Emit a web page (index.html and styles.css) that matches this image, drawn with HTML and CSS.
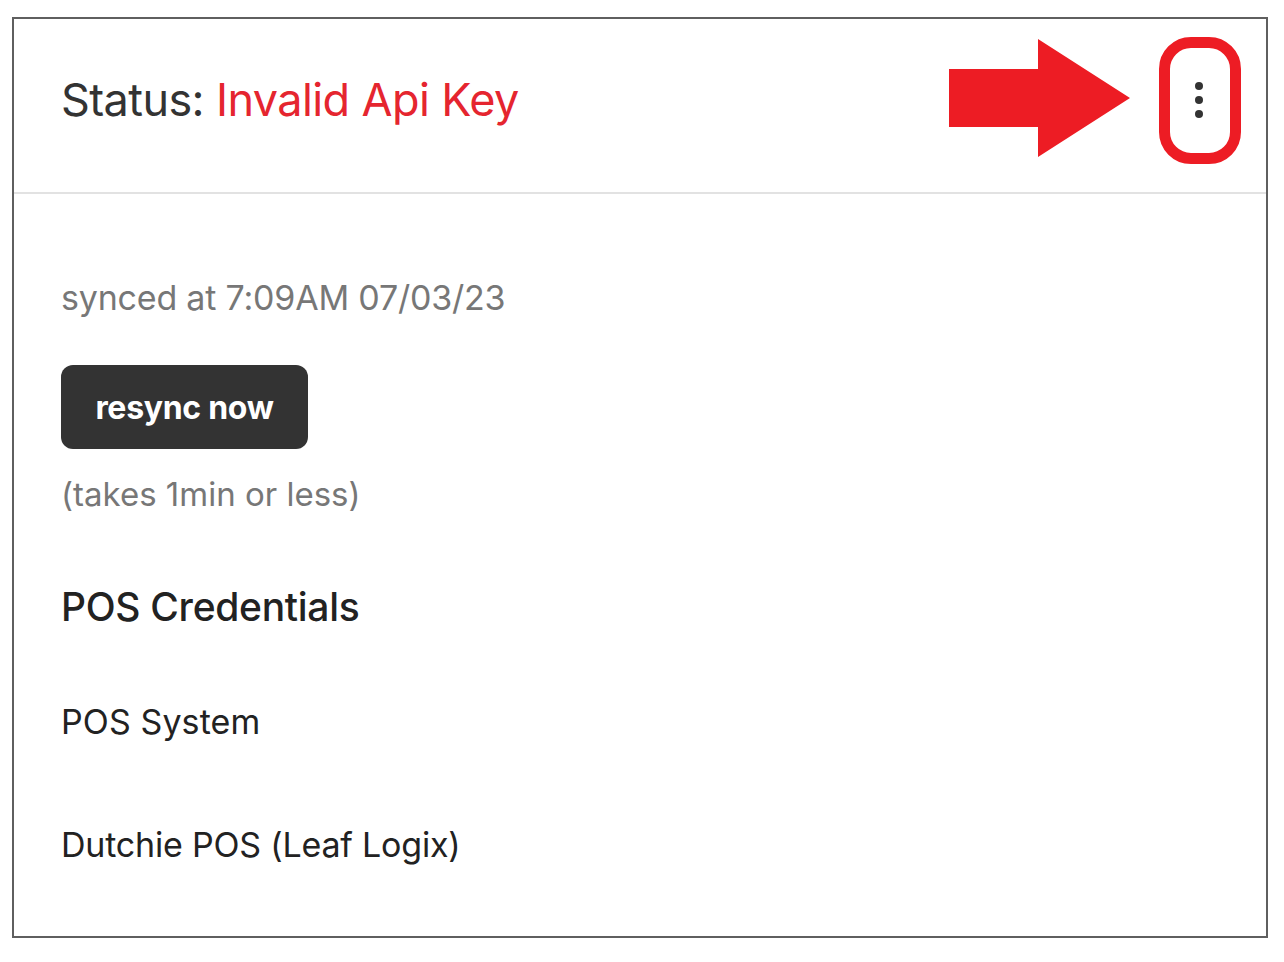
FILE: index.html
```html
<!DOCTYPE html>
<html lang="en">

<head>
  <meta charset="UTF-8">
  <meta name="viewport" content="width=device-width, initial-scale=1.0">
  <title>POS Sync Status</title>
  <link rel="stylesheet" href="styles.css">
</head>

<body>
  <div class="card">
    <div class="card-header">
      <h2 class="status">Status: <span class="status-error">Invalid Api Key</span></h2>
      <button class="menu-btn" aria-label="More options">
        <svg width="24" height="44" viewBox="0 0 24 44">
          <circle cx="12" cy="8" r="4" fill="#333" />
          <circle cx="12" cy="22" r="4" fill="#333" />
          <circle cx="12" cy="36" r="4" fill="#333" />
        </svg>
      </button>

      <!-- annotation drawn over the header -->
      <svg class="callout-arrow" width="181" height="118" viewBox="0 0 181 118">
        <polygon points="0,30 89,30 89,0 181,59 89,118 89,88 0,88" fill="#ed1c24" />
      </svg>
      <div class="callout-ring"></div>
    </div>

    <div class="card-body">
      <p class="synced">synced at 7:09AM 07/03/23</p>
      <button class="btn-resync">resync now</button>
      <p class="hint">(takes 1min or less)</p>
      <h3 class="section-title">POS Credentials</h3>
      <div class="field-label">POS System</div>
      <div class="field-value">Dutchie POS (Leaf Logix)</div>
    </div>
  </div>
</body>

</html>
```

FILE: styles.css
```css
body {
  margin: 0;
  padding: 0;
  font-family: Inter, "Noto Sans", Arial, sans-serif;
  background: #fff;
  color: #222;
}

.card {
  box-sizing: border-box;
  margin: 17px 16px 0 12px;
  width: 1256px;
  height: 921px;
  border: 2px solid #5f5f5f;
  background: #fff;
}

.card-header {
  position: relative;
  box-sizing: border-box;
  height: 175px;
  padding: 0 55px 12px 47px;
  border-bottom: 2px solid #e2e2e2;
  display: flex;
  align-items: center;
  justify-content: space-between;
}

.status {
  margin: 0;
  font-size: 45px;
  font-weight: 400;
  color: #333;
  letter-spacing: -0.6px;
}

.status-error {
  color: #e5252f;
}

.menu-btn {
  background: none;
  border: none;
  padding: 0;
  display: flex;
  cursor: pointer;
}

.callout-arrow {
  position: absolute;
  left: 935px;
  top: 20px;
}

.callout-ring {
  position: absolute;
  left: 1145px;
  top: 18px;
  box-sizing: border-box;
  width: 82px;
  height: 127px;
  border: 11px solid #ed1c24;
  border-radius: 32px;
}

.card-body {
  padding: 0 47px;
  display: flex;
  flex-direction: column;
  align-items: flex-start;
}

.synced {
  margin: 84px 0 0;
  font-size: 34px;
  line-height: 40px;
  color: #777;
  letter-spacing: -0.2px;
}

.btn-resync {
  margin-top: 47px;
  width: 247px;
  height: 84px;
  background-color: #333;
  color: #fff;
  border: none;
  border-radius: 12px;
  font-family: Inter, "Noto Sans", Arial, sans-serif;
  font-size: 32px;
  font-weight: 700;
  letter-spacing: -0.3px;
  cursor: pointer;
}

.hint {
  margin: 25px 0 0;
  font-size: 33px;
  line-height: 40px;
  color: #777;
}

.section-title {
  margin: 69px 0 0;
  font-size: 39px;
  line-height: 48px;
  font-weight: 500;
  color: #222;
  letter-spacing: -0.3px;
}

.field-label {
  margin-top: 71px;
  font-size: 34px;
  line-height: 40px;
  color: #222;
  letter-spacing: 0.1px;
}

.field-value {
  margin-top: 83px;
  font-size: 34px;
  line-height: 40px;
  color: #222;
  letter-spacing: -0.2px;
}
```
